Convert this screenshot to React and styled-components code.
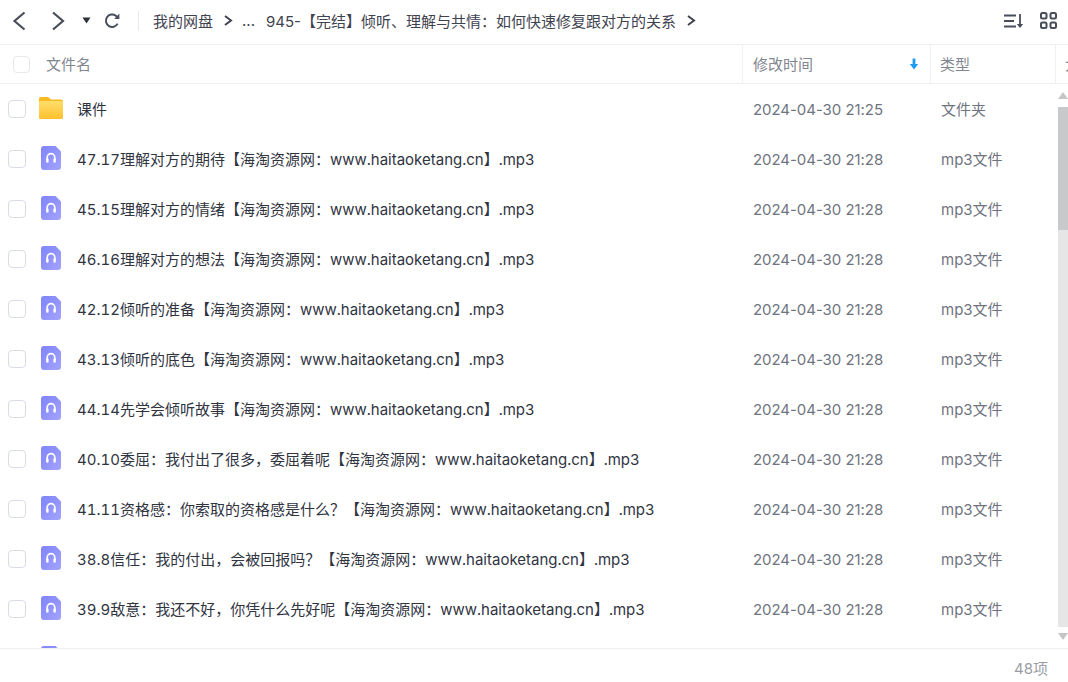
import React from "react";
import styled, { createGlobalStyle } from "styled-components";

const GlobalStyle = createGlobalStyle`
  html, body { margin: 0; padding: 0; height: 100%; background: #fff; overflow: hidden; }
  body { font-family: "Inter", "Noto Sans CJK SC", sans-serif; }
  #root { height: 100%; }
  * { box-sizing: border-box; }
`;

const Page = styled.div`
  width: 1068px;
  height: 682px;
  display: flex;
  flex-direction: column;
  overflow: hidden;
  background: #fff;
`;

const Toolbar = styled.div`
  height: 45px;
  flex: none;
  display: flex;
  align-items: center;
  padding: 0 11px 3px 10px;
  border-bottom: 1px solid #eff0f2;
`;

const NavButton = styled.button`
  border: 0;
  background: none;
  padding: 0;
  margin: 0 ${(p) => p.$mr || 0}px 0 0;
  display: flex;
  align-items: center;
  color: #484d5a;
`;

const Divider = styled.div`
  width: 1px;
  height: 20px;
  background: #e8e9ec;
  margin: 0 14px 0 17px;
`;

const Crumbs = styled.div`
  flex: 1;
  display: flex;
  align-items: center;
  font-size: 15px;
  color: #3f4350;
  white-space: nowrap;
`;

const CrumbText = styled.span`
  margin: 0 ${(p) => p.$mr || 0}px 0 ${(p) => p.$ml || 0}px;
`;

const ToolIcons = styled.div`
  display: flex;
  align-items: center;
  gap: 16px;
`;

const HeaderRow = styled.div`
  height: 39px;
  flex: none;
  display: flex;
  border-bottom: 1px solid #f0f1f3;
  font-size: 15px;
  color: #82868f;
`;

const HeaderCell = styled.div`
  width: ${(p) => p.$w}px;
  flex: ${(p) => (p.$grow ? 1 : "none")};
  display: flex;
  align-items: center;
  justify-content: ${(p) => (p.$between ? "space-between" : "flex-start")};
  padding: 0 11px 0 ${(p) => p.$pl}px;
  border-right: ${(p) => (p.$last ? "0" : "1px solid #f0f1f3")};
  white-space: nowrap;
  overflow: hidden;
`;

const HeaderLabel = styled.span`
  margin-bottom: 2px;
`;

const Box = styled.span`
  flex: none;
  width: ${(p) => p.$size || 18}px;
  height: ${(p) => p.$size || 18}px;
  border: 1px solid ${(p) => p.$color || "#d8dce3"};
  border-radius: 4px;
  background: #fff;
  margin-right: ${(p) => p.$mr}px;
`;

const Body = styled.div`
  flex: 1;
  min-height: 0;
  display: flex;
  overflow: hidden;
`;

const List = styled.div`
  flex: 1;
  min-width: 0;
  overflow: hidden;
`;

const Row = styled.div`
  height: 50px;
  display: flex;
  align-items: center;
  font-size: 15px;
`;

const NameCell = styled.div`
  width: 743px;
  flex: none;
  display: flex;
  align-items: center;
  padding-left: 8px;
  color: #30343f;
  white-space: nowrap;
`;

const NameText = styled.span`
  margin-bottom: 2px;
  font-variant-numeric: tabular-nums;
  text-spacing-trim: space-all;
`;

const IconSlot = styled.span`
  flex: none;
  width: 26px;
  display: flex;
  justify-content: center;
  margin: 0 13px 2px -1px;
`;

const TimeCell = styled.div`
  width: 188px;
  flex: none;
  padding-left: 10px;
  color: #6f7480;
  letter-spacing: -0.05px;
  white-space: nowrap;
`;

const TypeCell = styled.div`
  flex: 1;
  padding: 0 0 2px 10px;
  color: #6f7480;
  white-space: nowrap;
`;

const Scrollbar = styled.div`
  width: 10px;
  flex: none;
  display: flex;
  flex-direction: column;
  align-items: center;
  background: #fff;
  padding-top: 8px;
`;

const ArrowUp = styled.div`
  flex: none;
  width: 0;
  height: 0;
  border-left: 5px solid transparent;
  border-right: 5px solid transparent;
  border-bottom: 7px solid #c4c5c7;
  margin-bottom: 8px;
`;

const ArrowDown = styled.div`
  flex: none;
  width: 0;
  height: 0;
  border-left: 5px solid transparent;
  border-right: 5px solid transparent;
  border-top: 7px solid #c4c5c7;
  margin: 6px 0 8px;
`;

const Track = styled.div`
  flex: 1;
  width: 100%;
  background: #e6e6e6;
`;

const Thumb = styled.div`
  width: 100%;
  height: 123px;
  background: #c8c9cb;
`;

const Footer = styled.div`
  height: 34px;
  flex: none;
  border-top: 1px solid #eceef0;
  display: flex;
  align-items: center;
  justify-content: flex-end;
  padding: 4px 20px 0 0;
  font-size: 15px;
  color: #9a9da5;
`;

const Back = () => (
  <svg width="18" height="20" viewBox="0 0 18 20" fill="none" stroke="currentColor" strokeWidth="2.2">
    <path d="M14.5 1.5 L4.5 10 L14.5 18.5" />
  </svg>
);

const Forward = () => (
  <svg width="18" height="20" viewBox="0 0 18 20" fill="none" stroke="currentColor" strokeWidth="2.2">
    <path d="M4 1.5 L14 10 L4 18.5" />
  </svg>
);

const Caret = () => (
  <svg width="9" height="7" viewBox="0 0 9 7" fill="#2f323b">
    <path d="M0.5 0.5 H8.5 L4.5 6.5 Z" />
  </svg>
);

const Refresh = () => (
  <svg width="17" height="17" viewBox="0 0 17 17" fill="none" stroke="currentColor" strokeWidth="2">
    <path d="M13.6 11.6 A6.2 6.2 0 1 1 11.8 3.7 L14 5.6" />
    <path d="M15.4 1.6 V7 H10.2" fill="currentColor" stroke="none" />
  </svg>
);

const Chevron = () => (
  <svg width="10" height="11" viewBox="0 0 10 11" fill="none" stroke="#3f4350" strokeWidth="2">
    <path d="M2 1 L8 5.5 L2 10" />
  </svg>
);

const SortList = () => (
  <svg width="22" height="16" viewBox="0 0 22 16" fill="none" stroke="#484d5a" strokeWidth="1.8">
    <path d="M2 2.5 H14 M2 8 H12 M2 13.5 H14" />
    <path d="M18 1 V13" />
    <path d="M14.8 11 H21.2 L18 15 Z" fill="#484d5a" stroke="none" />
  </svg>
);

const Grid = () => (
  <svg width="17" height="17" viewBox="0 0 17 17" fill="none" stroke="#484d5a" strokeWidth="2">
    <rect x="1" y="1" width="5.5" height="5.5" rx="1.5" />
    <rect x="10.5" y="1" width="5.5" height="5.5" rx="1.5" />
    <rect x="1" y="10.5" width="5.5" height="5.5" rx="1.5" />
    <rect x="10.5" y="10.5" width="5.5" height="5.5" rx="1.5" />
  </svg>
);

const SortArrow = () => (
  <svg width="10" height="12" viewBox="0 0 10 12" fill="#1e9bf5">
    <path d="M3.6 0.5 H6.4 V6 H9.2 L5 11.5 L0.8 6 H3.6 Z" />
  </svg>
);

const Folder = () => (
  <svg width="26" height="24" viewBox="0 0 26 24">
    <defs>
      <linearGradient id="fold" x1="0" y1="0" x2="0" y2="1">
        <stop offset="0" stopColor="#ffdf6b" />
        <stop offset="1" stopColor="#ffc02e" />
      </linearGradient>
    </defs>
    <path d="M1 3 a2 2 0 0 1 2 -2 h7 l3 2.5 h10 a2 2 0 0 1 2 2 V21 a2 2 0 0 1 -2 2 H3 a2 2 0 0 1 -2 -2 Z" fill="#f9b91f" />
    <rect x="1" y="5" width="24" height="18" rx="2" fill="url(#fold)" />
  </svg>
);

const Audio = () => (
  <svg width="20" height="24" viewBox="0 0 20 24">
    <defs>
      <linearGradient id="aud" x1="0" y1="0" x2="1" y2="1">
        <stop offset="0" stopColor="#7f84fa" />
        <stop offset="1" stopColor="#a3a3fd" />
      </linearGradient>
    </defs>
    <path d="M3 0 H14.5 L20 5.5 V21 a3 3 0 0 1 -3 3 H3 a3 3 0 0 1 -3 -3 V3 a3 3 0 0 1 3 -3 Z" fill="url(#aud)" />
    <path d="M6.2 15 V11.5 a3.8 3.8 0 0 1 7.6 0 V15" fill="none" stroke="#fff" strokeWidth="1.7" />
    <rect x="5.2" y="12.6" width="2.4" height="4.2" rx="1" fill="#fff" />
    <rect x="12.4" y="12.6" width="2.4" height="4.2" rx="1" fill="#fff" />
  </svg>
);

const site = "【海淘资源网：www.haitaoketang.cn】.mp3";
const files = [
  "47.17理解对方的期待" + site,
  "45.15理解对方的情绪" + site,
  "46.16理解对方的想法" + site,
  "42.12倾听的准备" + site,
  "43.13倾听的底色" + site,
  "44.14先学会倾听故事" + site,
  "40.10委屈：我付出了很多，委屈着呢" + site,
  "41.11资格感：你索取的资格感是什么？" + site,
  "38.8信任：我的付出，会被回报吗？" + site,
  "39.9敌意：我还不好，你凭什么先好呢" + site,
];

export default function App() {
  return (
    <Page>
      <GlobalStyle />
      <Toolbar>
        <NavButton $mr={21}><Back /></NavButton>
        <NavButton $mr={15}><Forward /></NavButton>
        <NavButton $mr={13}><Caret /></NavButton>
        <NavButton><Refresh /></NavButton>
        <Divider />
        <Crumbs>
          <CrumbText $mr={10}>我的网盘</CrumbText>
          <Chevron />
          <CrumbText $ml={9} $mr={11}>...</CrumbText>
          <CrumbText $mr={10}>945-【完结】倾听、理解与共情：如何快速修复跟对方的关系</CrumbText>
          <Chevron />
        </Crumbs>
        <ToolIcons>
          <SortList />
          <Grid />
        </ToolIcons>
      </Toolbar>
      <HeaderRow>
        <HeaderCell $w={743} $pl={13}>
          <Box $size={17} $color="#e6e8ec" $mr={16} />
          <HeaderLabel>文件名</HeaderLabel>
        </HeaderCell>
        <HeaderCell $w={188} $pl={10} $between>
          <HeaderLabel>修改时间</HeaderLabel>
          <SortArrow />
        </HeaderCell>
        <HeaderCell $w={125} $pl={9}><HeaderLabel>类型</HeaderLabel></HeaderCell>
        <HeaderCell $grow $last $pl={9}><HeaderLabel>大小</HeaderLabel></HeaderCell>
      </HeaderRow>
      <Body>
        <List>
          <Row>
            <NameCell>
              <Box $mr={13} />
              <IconSlot><Folder /></IconSlot>
              <NameText>课件</NameText>
            </NameCell>
            <TimeCell>2024-04-30 21:25</TimeCell>
            <TypeCell>文件夹</TypeCell>
          </Row>
          {files.map((f) => (
            <Row key={f}>
              <NameCell>
                <Box $mr={13} />
                <IconSlot><Audio /></IconSlot>
                <NameText>{f}</NameText>
              </NameCell>
              <TimeCell>2024-04-30 21:28</TimeCell>
              <TypeCell>mp3文件</TypeCell>
            </Row>
          ))}
          <Row>
            <NameCell>
              <Box $mr={13} />
              <IconSlot><Audio /></IconSlot>
            </NameCell>
          </Row>
        </List>
        <Scrollbar>
          <ArrowUp />
          <Track><Thumb /></Track>
          <ArrowDown />
        </Scrollbar>
      </Body>
      <Footer>48项</Footer>
    </Page>
  );
}
